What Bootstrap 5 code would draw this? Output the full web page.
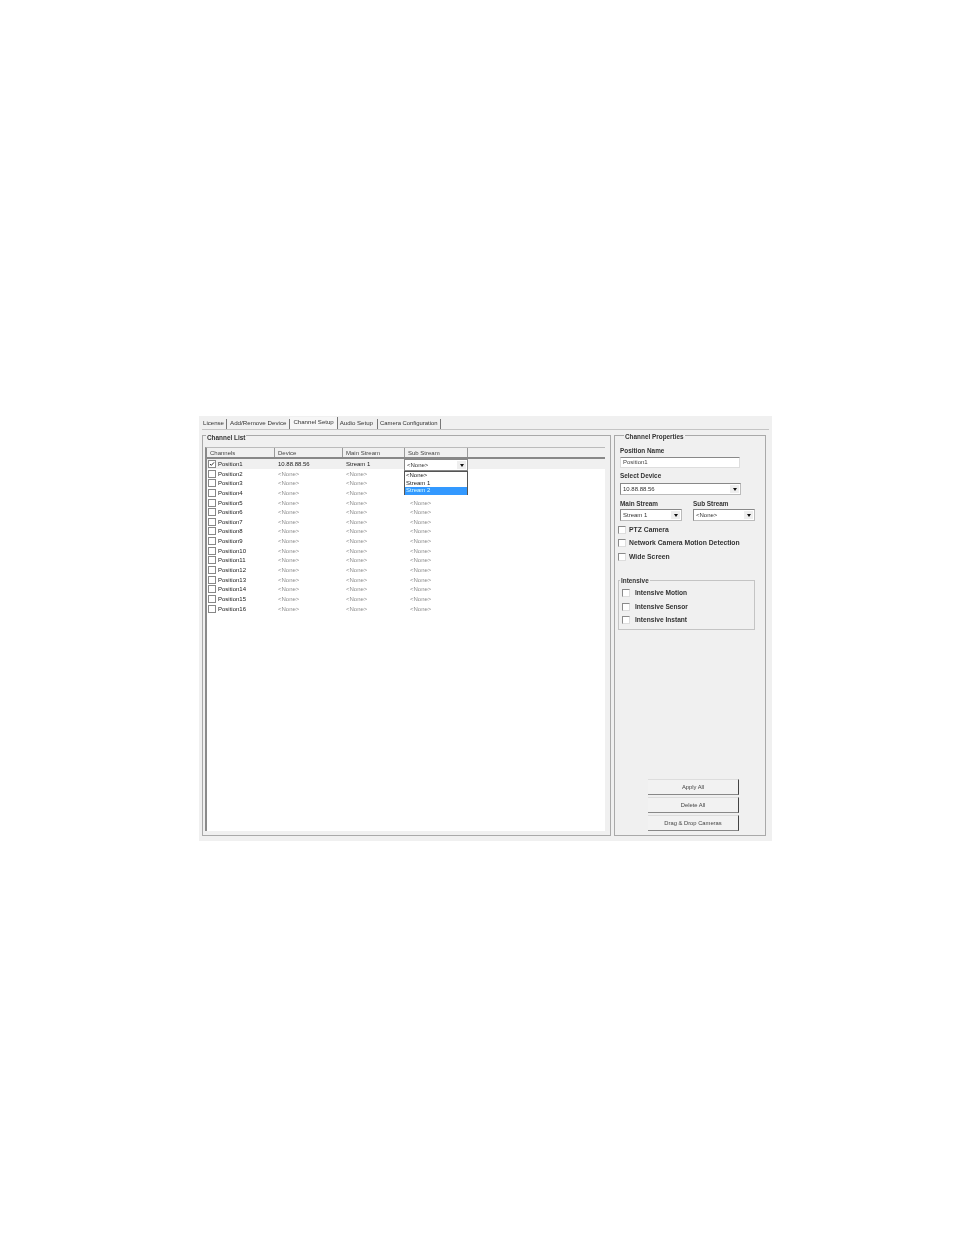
<!DOCTYPE html>
<html lang="en">
<head>
<meta charset="utf-8">
<title>Channel Setup</title>
<link href="https://cdn.jsdelivr.net/npm/bootstrap@5.3.0/dist/css/bootstrap.min.css" rel="stylesheet">
<style>
html,body{background:#fff;margin:0}
body{font-family:"Liberation Sans",Arial,sans-serif;font-size:6px;line-height:8px;color:#222;height:1235px;overflow:hidden}
.sheet{margin:416px 0 0 199px;width:573px;height:425px;background:#f0f0f0;padding:1px 6px 0 3px;filter:blur(.3px)}
.tabbar{height:13px;border-bottom:1px solid #c4c4c4;margin:0 -3px 0 0;align-items:flex-start}
.tabitem{height:10px;margin-top:2px;border-right:1px solid #777;white-space:nowrap;line-height:8px;color:#333;font-size:6.1px}
.t1{padding:0 2px 0 1px}.t2{padding:0 3px 0 3px;font-size:6.2px}.t3{padding:0 3px 0 3px;height:12px;margin-top:0;background:#f6f6f6;line-height:9px}.t4{padding:0 4px 0 2px}.t5{padding:0 2px 0 2px;font-size:5.9px}
.panes{gap:2px;margin-top:5px}
.grp{position:relative;border:1px solid #a9a9a9;height:401px}
.grp-l{width:409px;padding:11px 5px 5px 2px;flex:none;margin-right:1px}
.grp-r{width:152px;padding:11px 0 0 5px;flex:none}
.grp-t{position:absolute;top:-2px;left:3px;background:#f0f0f0;padding:0 1px;font-weight:700;color:#333;line-height:8px;font-size:6.4px}
.lst{height:384px;background:#fff;border-left:2px solid #8a8a8a;border-top:1px solid #bbb;position:relative}
.hdr{height:11px;background:#f0f0f0;border-bottom:2px solid #888;line-height:11px;color:#444}
.hc{border-right:1px solid #999;padding-left:3px;height:9px}
.c1{width:68px;flex:none}.c2{width:68px;flex:none}.c3{width:62px;flex:none}.c4{width:63px;flex:none}
.rw{height:9.65px;line-height:9.65px;color:#222}
.rw .cell{white-space:nowrap;padding-top:1px;height:9.65px}
.rw .cell.c2,.rw .cell.c3{padding-left:3px}
.rw .cell.c4{padding-left:5px}
.rw.sel{background:#f0f0f0}
.nn{color:#8c8c8c}
.bx{width:8px;height:8px;border:1px solid #888;background:#fff;margin:0 2px 0 1px;flex:none;display:inline-block}
.cell.c1{display:flex;align-items:flex-start}
.bx svg{display:block}
.combo{background:#fff;border:1px solid #bbb;border-top-color:#888;border-left-color:#888;height:12px;display:flex;align-items:center;padding-left:2px;color:#333;position:relative;white-space:nowrap}
.arrow{position:absolute;right:1px;top:1px;bottom:1px;width:9px;background:#eee;display:flex;align-items:center;justify-content:center}
.arrow::after{content:"";border:2px solid transparent;border-top:3px solid #111;border-bottom:0}
.over{position:absolute;left:197px;top:0;width:64px;z-index:2}
.over .combo{height:12px;margin-top:11px;border-color:#888}
.pop{border:1px solid #555;background:#fff;height:24px;padding-top:0;line-height:7.6px;color:#222}
.pop div{height:7.6px;padding-left:1px}
.pop .hot{background:#3399ff;color:#dff}
.lbl{font-weight:700;color:#333;line-height:8px;height:8px;white-space:nowrap;font-size:6.4px}
.txt{background:#fff;border:1px solid #ddd;border-top-color:#888;height:11px;width:120px;line-height:9px;padding-left:2px;color:#444;margin-top:2px}
.lbl2{margin-top:4px}
.combo.w1{width:121px;margin-top:3px}
.row2{margin-top:5px}
.combo.w2{width:62px;margin-top:1px}
.cg{width:73px;flex:none}
.opt{height:8px;margin-top:5.6px;gap:3px;font-weight:700;color:#333;white-space:nowrap;align-items:center;margin-left:-2px;font-size:6.8px}
.opt.first{margin-top:4.5px}
.opt .ck{width:8px;height:8px;border:1px solid #8a8a8a;border-right-color:#ddd;border-bottom-color:#ddd;background:#fff;flex:none}
.igrp{position:relative;border:1px solid #c4c4c4;width:137px;height:50px;margin:19.5px 0 0 -2px;padding:2.5px 0 0 3px}
.igrp .opt{margin-left:0;gap:5px;font-size:6.6px}
.igrp .grp-t{left:1px;top:-4px}
.acts{margin:149px 0 0 28px;width:91px;gap:2px}
.wbtn{height:16px;border:0;border-right:1px solid #444;border-bottom:1px solid #888;border-top:1px solid #ddd;background:#f2f2f2;font:5.8px/14px "Liberation Sans",Arial,sans-serif;color:#444;padding:0;text-align:center}
</style>
</head>
<body>
<div class="sheet">
  <div class="d-flex tabbar">
    <div class="tabitem t1">License</div>
    <div class="tabitem t2">Add/Remove Device</div>
    <div class="tabitem t3">Channel Setup</div>
    <div class="tabitem t4">Audio Setup</div>
    <div class="tabitem t5">Camera Configuration</div>
  </div>
  <div class="d-flex panes">
    <div class="grp grp-l">
      <div class="grp-t">Channel List</div>
      <div class="lst">
        <div class="d-flex hdr"><div class="hc c1">Channels</div><div class="hc c2">Device</div><div class="hc c3">Main Stream</div><div class="hc c4">Sub Stream</div></div>
        <div class="over">
          <div class="combo">&lt;None&gt;<span class="arrow"></span></div>
          <div class="pop"><div>&lt;None&gt;</div><div>Stream 1</div><div class="hot">Stream 2</div></div>
        </div>
        <div class="d-flex rw sel"><div class="cell c1"><span class="bx"><svg width="6" height="6" viewBox="0 0 6 6"><path d="M1 3l1.3 1.4L5 1.4" fill="none" stroke="#333" stroke-width="1"/></svg></span>Position1</div><div class="cell c2">10.88.88.56</div><div class="cell c3">Stream 1</div></div>
        <div id="rows"></div>
      </div>
    </div>
    <div class="grp grp-r">
      <div class="grp-t" style="left:9px;top:-3px">Channel Properties</div>
      <div class="lbl">Position Name</div>
      <div class="txt">Position1</div>
      <div class="lbl lbl2">Select Device</div>
      <div class="combo w1">10.88.88.56<span class="arrow"></span></div>
      <div class="d-flex row2">
        <div class="cg"><div class="lbl">Main Stream</div><div class="combo w2">Stream 1<span class="arrow"></span></div></div>
        <div class="cg"><div class="lbl">Sub Stream</div><div class="combo w2">&lt;None&gt;<span class="arrow"></span></div></div>
      </div>
      <div class="d-flex opt first"><span class="ck"></span>PTZ Camera</div>
      <div class="d-flex opt"><span class="ck"></span>Network Camera Motion Detection</div>
      <div class="d-flex opt"><span class="ck"></span>Wide Screen</div>
      <div class="igrp">
        <div class="grp-t">Intensive</div>
        <div class="d-flex opt"><span class="ck"></span>Intensive Motion</div>
        <div class="d-flex opt"><span class="ck"></span>Intensive Sensor</div>
        <div class="d-flex opt"><span class="ck"></span>Intensive Instant</div>
      </div>
      <div class="d-flex flex-column acts">
        <button class="wbtn" type="button">Apply All</button>
        <button class="wbtn" type="button">Delete All</button>
        <button class="wbtn" type="button">Drag &amp; Drop Cameras</button>
      </div>
    </div>
  </div>
</div>
<script>
var h='';for(var i=2;i<=16;i++){h+='<div class="d-flex rw"><div class="cell c1"><span class="bx"></span>Position'+i+'</div><div class="cell c2 nn">&lt;None&gt;</div><div class="cell c3 nn">&lt;None&gt;</div>'+(i>4?'<div class="cell c4 nn">&lt;None&gt;</div>':'')+'</div>';}
document.getElementById('rows').innerHTML=h;
</script>
<script src="https://cdn.jsdelivr.net/npm/bootstrap@5.3.0/dist/js/bootstrap.bundle.min.js"></script>
</body>
</html>
